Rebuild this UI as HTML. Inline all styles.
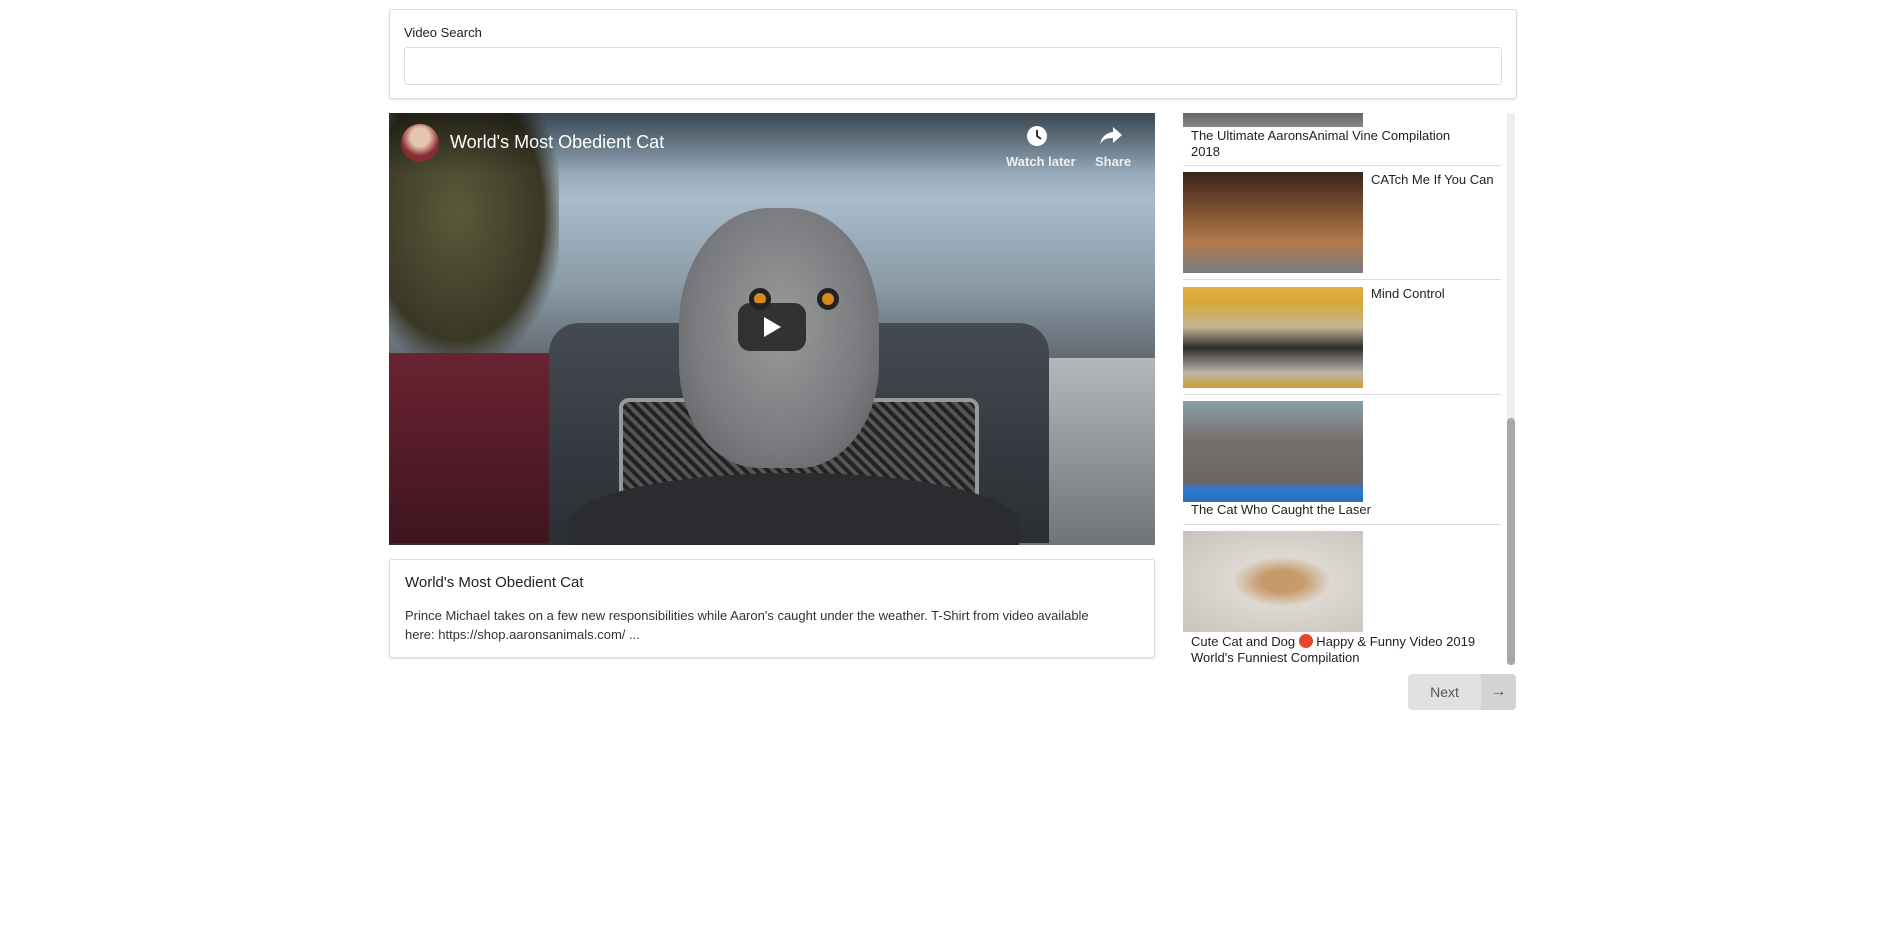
<!DOCTYPE html>
<html><head><meta charset="utf-8"><style>
*{box-sizing:border-box;margin:0;padding:0}
body{width:1903px;height:934px;background:#fff;font-family:"Liberation Sans",sans-serif;color:#222;position:relative;overflow:hidden}
.card{position:absolute;background:#fff;border:1px solid #dcdcdc;border-radius:3px;box-shadow:0 1px 2px rgba(0,0,0,.12)}
.abs{position:absolute}
.item{position:absolute;left:1183px;width:318px;border-bottom:1px solid #ddd}
.th{position:absolute;left:0;width:180px;height:101px}
.tt{position:absolute;font-size:13px;line-height:16px;color:#222;white-space:nowrap}
</style></head><body>
<div class="card" style="left:389px;top:9px;width:1128px;height:90px">
  <div class="abs" style="left:14px;top:15px;font-size:13px">Video Search</div>
  <div class="abs" style="left:14px;top:37px;width:1098px;height:38px;border:1px solid #ddd;border-radius:3px"></div>
</div>

<div class="abs" style="left:389px;top:113px;width:766px;height:432px;overflow:hidden;background:linear-gradient(180deg,#6d8496 0%,#a9bccb 20%,#8a9aa6 40%,#5b6168 60%,#3a3d42 80%,#2c2e31 100%)">
  <div class="abs" style="left:0;top:0;width:170px;height:250px;background:radial-gradient(ellipse at 40% 40%,#5a5a3a,#3a3826 60%,transparent 75%)"></div>
  <div class="abs" style="left:0;top:240px;width:170px;height:190px;background:linear-gradient(#6b2332,#3e1520)"></div>
  <div class="abs" style="left:610px;top:245px;width:156px;height:190px;background:linear-gradient(#b5b8bb,#6f7276)"></div>
  <div class="abs" style="left:160px;top:210px;width:500px;height:220px;background:linear-gradient(#454a52,#2b2e33);border-radius:30px 30px 0 0"></div>
  <div class="abs" style="left:230px;top:285px;width:360px;height:110px;background:repeating-linear-gradient(45deg,#555 0 4px,#222 4px 8px);border:4px solid #999;border-radius:10px"></div>
  <div class="abs" style="left:290px;top:95px;width:200px;height:260px;background:radial-gradient(ellipse at 50% 45%,#9a9a9c,#7a7b7e 60%,#5a5b5e);border-radius:45% 45% 40% 40%"></div>
  <div class="abs" style="left:360px;top:175px;width:22px;height:22px;border-radius:50%;background:#d48a1e;border:5px solid #222"></div>
  <div class="abs" style="left:428px;top:175px;width:22px;height:22px;border-radius:50%;background:#d48a1e;border:5px solid #222"></div>
  <div class="abs" style="left:180px;top:360px;width:450px;height:100px;border-radius:50% 50% 0 0;background:#2a2c30"></div>
  <div class="abs" style="left:0;top:0;width:766px;height:60px;background:linear-gradient(rgba(0,0,0,.45),transparent)"></div>
  <div class="abs" style="left:12px;top:11px;width:38px;height:38px;border-radius:50%;background:radial-gradient(circle at 50% 35%,#e6c6b0 30%,#8a2c33 60%)"></div>
  <div class="abs" style="left:61px;top:19px;font-size:18px;color:#fff">World's Most Obedient Cat</div>
  <svg class="abs" style="left:636px;top:11px" width="24" height="24" viewBox="0 0 24 24"><circle cx="12" cy="12" r="10" fill="#fff"/><path d="M12 6v6l4 3" stroke="#333" stroke-width="2" fill="none"/></svg>
  <div class="abs" style="left:617px;top:41px;font-size:13px;color:#eee;font-weight:bold">Watch later</div>
  <svg class="abs" style="left:710px;top:12px" width="24" height="22" viewBox="0 0 24 22"><path d="M14 2l9 8-9 8v-5c-7 0-11 2-13 7 1-7 5-12 13-13z" fill="#fff"/></svg>
  <div class="abs" style="left:706px;top:41px;font-size:13px;color:#eee;font-weight:bold">Share</div>
  <div class="abs" style="left:349px;top:190px;width:68px;height:48px;border-radius:12px;background:rgba(33,33,33,.85)"></div>
  <svg class="abs" style="left:373px;top:203px" width="20" height="22"><path d="M2 1l17 10L2 21z" fill="#fff"/></svg>
</div>

<div class="card" style="left:389px;top:559px;width:766px;height:99px">
  <div class="abs" style="left:15px;top:14px;font-size:15px;color:#222">World's Most Obedient Cat</div>
  <div class="abs" style="left:15px;top:46px;width:720px;font-size:13px;line-height:19px;color:#333">Prince Michael takes on a few new responsibilities while Aaron's caught under the weather. T-Shirt from video available<br>here: https://shop.aaronsanimals.com/ ...</div>
</div>

<div class="abs" style="left:1507px;top:113px;width:8px;height:552px;background:#eee"></div>
<div class="abs" style="left:1507px;top:418px;width:8px;height:247px;background:#a8a8a8;border-radius:4px"></div>

<div class="item" style="top:113px;height:53px">
  <div class="th" style="top:0;height:14px;background:linear-gradient(#666,#888)"></div>
  <div class="tt" style="left:8px;top:15px">The Ultimate AaronsAnimal Vine Compilation<br>2018</div>
</div>
<div class="item" style="top:166px;height:114px">
  <div class="th" style="top:6px;background:linear-gradient(#3a2419 0%,#8a5a36 45%,#b07a4c 70%,#7a7a82 100%)"></div>
  <div class="tt" style="left:188px;top:6px">CATch Me If You Can</div>
</div>
<div class="item" style="top:280px;height:115px">
  <div class="th" style="top:7px;background:linear-gradient(#e0b040 0%,#d8a838 15%,#c4b494 40%,#2e2c2c 60%,#bcb4a8 85%,#d0a030 100%)"></div>
  <div class="tt" style="left:188px;top:6px">Mind Control</div>
</div>
<div class="item" style="top:395px;height:130px">
  <div class="th" style="top:6px;background:linear-gradient(#8aa0a8 0%,#75706c 40%,#6a6664 80%,#2a7ad0 88%,#2a6fb8 100%)"></div>
  <div class="tt" style="left:8px;top:107px">The Cat Who Caught the Laser</div>
</div>
<div class="item" style="top:525px;height:140px;border-bottom:none">
  <div class="th" style="top:6px;background:radial-gradient(ellipse at 55% 50%,#c89a6a 0 15%,#ddd9d2 35%,#c8c4bc)"></div>
  <div class="tt" style="left:8px;top:109px">Cute Cat and Dog <span style="display:inline-block;width:14px;height:14px;border-radius:50%;background:#e8452a;vertical-align:-2px"></span> Happy &amp; Funny Video 2019<br>World's Funniest Compilation</div>
</div>

<div class="abs" style="left:1408px;top:674px;width:108px;height:36px;border-radius:4px;background:#e0e1e2;overflow:hidden">
  <div class="abs" style="left:0;top:0;width:73px;height:36px;line-height:36px;text-align:center;font-size:14px;color:#555">Next</div>
  <div class="abs" style="left:73px;top:0;width:35px;height:36px;background:#d2d3d4;text-align:center;line-height:36px;font-size:16px;color:#555">→</div>
</div>
</body></html>
